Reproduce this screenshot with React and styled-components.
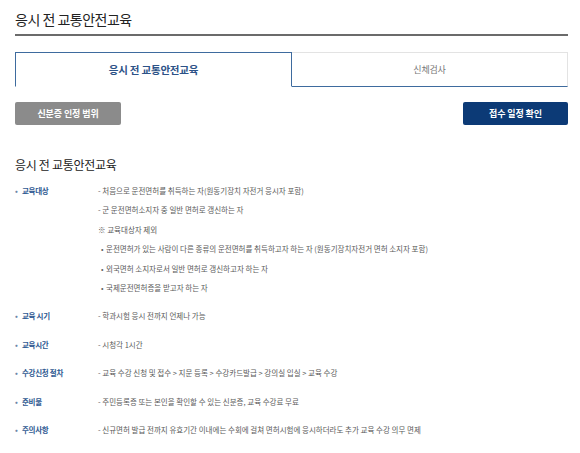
import React from "react";
import styled, { createGlobalStyle } from "styled-components";

const GlobalStyle = createGlobalStyle`
  html, body {
    margin: 0;
    padding: 0;
    background: #fff;
    overflow: hidden;
  }
  body {
    font-family: "Noto Sans CJK KR", "Noto Sans", sans-serif;
    color: #333;
  }
`;

const Page = styled.div`
  box-sizing: border-box;
  width: 580px;
  padding: 0 12px 0 15px;
`;

const Title = styled.h1`
  margin: 0;
  padding-top: 8px;
  height: 26px;
  font-size: 14px;
  font-weight: 400;
  letter-spacing: -0.5px;
  line-height: 22px;
  color: #222;
  border-bottom: 2px solid #6b6b6b;
`;

const Tabs = styled.div`
  display: flex;
  margin-top: 16px;
  height: 35px;
`;

const Tab = styled.div`
  flex: 1;
  box-sizing: border-box;
  display: flex;
  align-items: center;
  justify-content: center;
  font-size: ${(p) => (p.$active ? 10.5 : 9)}px;
  letter-spacing: -0.2px;
  font-weight: ${(p) => (p.$active ? 700 : 400)};
  color: ${(p) => (p.$active ? "#2c5287" : "#777")};
  border: 1px solid ${(p) => (p.$active ? "#3e6b9e" : "#e3e3e3")};
  border-bottom: 1px solid ${(p) => (p.$active ? "transparent" : "#3e6b9e")};
  border-left: ${(p) => (p.$active ? "1px solid #3e6b9e" : "none")};
`;

const Buttons = styled.div`
  display: flex;
  justify-content: space-between;
  margin-top: 15px;
`;

const Button = styled.button`
  width: ${(p) => p.$w}px;
  height: 23px;
  border: none;
  border-radius: 2px;
  padding: 0;
  font-family: inherit;
  font-size: 9px;
  font-weight: 700;
  letter-spacing: -0.1px;
  color: #fff;
  background: ${(p) => p.$bg};
`;

const SectionTitle = styled.h2`
  margin: 32px 0 0;
  font-size: 12px;
  font-weight: 400;
  letter-spacing: -0.3px;
  line-height: 16px;
  color: #222;
`;

const List = styled.dl`
  margin: 8px 0 0;
  padding: 0;
`;

const Row = styled.div`
  display: flex;
  margin-bottom: 9px;
`;

const Label = styled.dt`
  width: 83px;
  flex-shrink: 0;
  font-size: 7.5px;
  line-height: 19.4px;
  font-weight: 700;
  letter-spacing: -0.3px;
  color: #2f5a92;
  &::before {
    content: "•";
    display: inline-block;
    width: 7px;
    color: #6b85a8;
  }
`;

const Values = styled.dd`
  margin: 0;
`;

const Line = styled.div`
  font-size: 7.5px;
  line-height: 19.4px;
  letter-spacing: 0;
  color: #5a5a5a;
  padding-left: ${(p) => (p.$sub ? 3 : 0)}px;
  &::before {
    content: ${(p) => (p.$sub ? '"•"' : '""')};
    display: ${(p) => (p.$sub ? "inline-block" : "none")};
    width: 5px;
    color: #666;
  }
`;

const rows = [
  {
    label: "교육대상",
    lines: [
      { text: "- 처음으로 운전면허를 취득하는 자(원동기장치 자전거 응시자 포함)" },
      { text: "- 군 운전면허소지자 중 일반 면허로 갱신하는 자" },
      { text: "※ 교육대상자 제외" },
      { text: "운전면허가 있는 사람이 다른 종류의 운전면허를 취득하고자 하는 자 (원동기장치자전거 면허 소지자 포함)", sub: true },
      { text: "외국면허 소지자로서 일반 면허로 갱신하고자 하는 자", sub: true },
      { text: "국제운전면허증을 받고자 하는 자", sub: true },
    ],
  },
  { label: "교육 시기", lines: [{ text: "- 학과시험 응시 전까지 언제나 가능" }] },
  { label: "교육시간", lines: [{ text: "- 시청각 1시간" }] },
  {
    label: "수강신청 절차",
    lines: [{ text: "- 교육 수강 신청 및 접수 > 지문 등록 > 수강카드발급 > 강의실 입실 > 교육 수강" }],
  },
  {
    label: "준비물",
    lines: [{ text: "- 주민등록증 또는 본인을 확인할 수 있는 신분증, 교육 수강료 무료" }],
  },
  {
    label: "주의사항",
    lines: [{ text: "- 신규면허 발급 전까지 유효기간 이내에는 수회에 걸쳐 면허시험에 응시하더라도 추가 교육 수강 의무 면제" }],
  },
];

export default function App() {
  return (
    <>
      <GlobalStyle />
      <Page>
        <Title>응시 전 교통안전교육</Title>
        <Tabs>
          <Tab $active>응시 전 교통안전교육</Tab>
          <Tab>신체검사</Tab>
        </Tabs>
        <Buttons>
          <Button $w={106} $bg="#8b8b8b">신분증 인정 범위</Button>
          <Button $w={105} $bg="#0c3a76">접수 일정 확인</Button>
        </Buttons>
        <SectionTitle>응시 전 교통안전교육</SectionTitle>
        <List>
          {rows.map((row) => (
            <Row key={row.label}>
              <Label>{row.label}</Label>
              <Values>
                {row.lines.map((line, i) => (
                  <Line key={i} $sub={line.sub}>
                    {line.text}
                  </Line>
                ))}
              </Values>
            </Row>
          ))}
        </List>
      </Page>
    </>
  );
}
